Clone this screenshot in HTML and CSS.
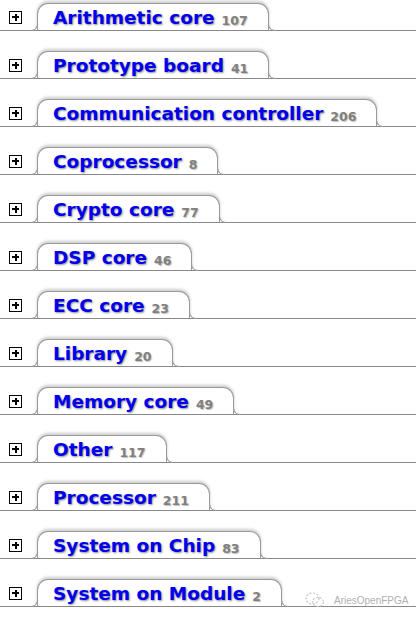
FILE: index.html
```html
<!DOCTYPE html>
<html>
<head>
<meta charset="utf-8">
<link rel="stylesheet" href="styles.css">
</head>
<body>
<div class="list">
  <div class="row"><span class="plus"></span><div class="tab"><span class="name">Arithmetic core</span><span class="count">107</span></div></div>
  <div class="row"><span class="plus"></span><div class="tab"><span class="name">Prototype board</span><span class="count">41</span></div></div>
  <div class="row"><span class="plus"></span><div class="tab"><span class="name">Communication controller</span><span class="count">206</span></div></div>
  <div class="row"><span class="plus"></span><div class="tab"><span class="name">Coprocessor</span><span class="count">8</span></div></div>
  <div class="row"><span class="plus"></span><div class="tab"><span class="name">Crypto core</span><span class="count">77</span></div></div>
  <div class="row"><span class="plus"></span><div class="tab"><span class="name">DSP core</span><span class="count">46</span></div></div>
  <div class="row"><span class="plus"></span><div class="tab"><span class="name">ECC core</span><span class="count">23</span></div></div>
  <div class="row"><span class="plus"></span><div class="tab"><span class="name">Library</span><span class="count">20</span></div></div>
  <div class="row"><span class="plus"></span><div class="tab"><span class="name">Memory core</span><span class="count">49</span></div></div>
  <div class="row"><span class="plus"></span><div class="tab"><span class="name">Other</span><span class="count">117</span></div></div>
  <div class="row"><span class="plus"></span><div class="tab"><span class="name">Processor</span><span class="count">211</span></div></div>
  <div class="row"><span class="plus"></span><div class="tab"><span class="name">System on Chip</span><span class="count">83</span></div></div>
  <div class="row"><span class="plus"></span><div class="tab"><span class="name">System on Module</span><span class="count">2</span></div></div>
</div>
<div class="watermark">
  <svg width="20" height="16" viewBox="0 0 20 16"><g fill="none" stroke="#c8c8c8" stroke-width="1.2" stroke-dasharray="2 1.5"><ellipse cx="7.5" cy="6.5" rx="6.5" ry="5.5"/><ellipse cx="13" cy="10" rx="5.5" ry="4.5"/></g></svg>
  <span>AriesOpenFPGA</span>
</div>
</body>
</html>
```
FILE: styles.css
```css
html, body {
  margin: 0;
  padding: 0;
  background: #fff;
}
body {
  width: 416px;
  height: 618px;
  overflow: hidden;
  position: relative;
  font-family: "DejaVu Sans", Verdana, sans-serif;
}
.list {
  display: flex;
  flex-direction: column;
}
.row {
  display: flex;
  align-items: flex-end;
  height: 27px;
  margin-top: 20px;
  border-bottom: 1px solid #8a8a8a;
}
.row:first-child {
  margin-top: 3px;
}
.plus {
  align-self: center;
  margin-left: 9px;
  margin-top: 1px;
  width: 11px;
  height: 11px;
  border: 1px solid #000;
  position: relative;
  flex: none;
}
.plus::before, .plus::after {
  content: "";
  position: absolute;
  background: #000;
}
.plus::before {
  left: 2px;
  top: 4.5px;
  width: 7px;
  height: 2px;
}
.plus::after {
  left: 4.5px;
  top: 2px;
  width: 2px;
  height: 7px;
}
.tab {
  position: relative;
  margin-left: 15px;
  height: 26px;
  display: flex;
  align-items: center;
  padding: 0 20px 0 15px;
  border: 1px solid #9a9a9a;
  border-bottom: none;
  border-radius: 11px 11px 0 0;
  background: #fff;
  box-shadow: 0 -2px 3px rgba(0,0,0,0.2);
  white-space: nowrap;
}
.tab::before, .tab::after {
  content: "";
  position: absolute;
  bottom: 0;
  width: 6px;
  height: 8px;
  border-bottom: 1px solid #9a9a9a;
  margin-bottom: -1px;
}
.tab::before {
  left: -7px;
  border-right: 1px solid #9a9a9a;
  border-bottom-right-radius: 7px;
}
.tab::after {
  right: -7px;
  border-left: 1px solid #9a9a9a;
  border-bottom-left-radius: 7px;
}
.name {
  font-size: 18.5px;
  font-weight: bold;
  color: #0000ee;
  text-shadow: 1px 1px 2px rgba(0,0,0,0.45);
  padding-top: 1px;
}
.count {
  font-size: 12.5px;
  font-weight: bold;
  color: #808080;
  text-shadow: 1px 1px 1px rgba(0,0,0,0.25);
  margin-left: 7px;
  padding-top: 6px;
}
.watermark {
  position: absolute;
  left: 305px;
  top: 592px;
  display: flex;
  align-items: center;
  gap: 9px;
  font-family: "Liberation Sans", Arial, sans-serif;
  font-size: 10px;
  color: #b0b0b0;
}
```
